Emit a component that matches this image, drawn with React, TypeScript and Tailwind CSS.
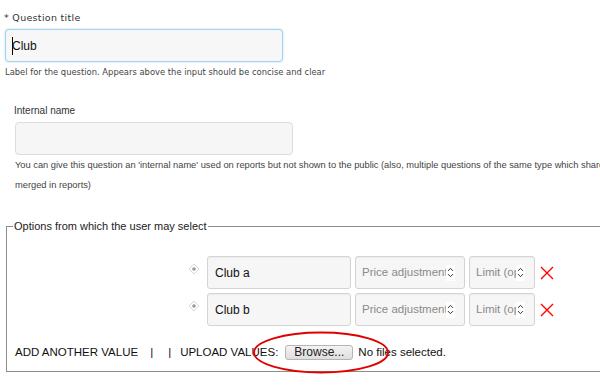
import { ChevronUp, ChevronDown } from 'lucide-react';

function Spinner() {
  return (
    <div className="flex flex-col items-center justify-center bg-white w-[9px] h-[16px] -space-y-[3px] shrink-0">
      <ChevronUp className="w-[9px] h-[9px] text-[#222]" strokeWidth={2.5} />
      <ChevronDown className="w-[9px] h-[9px] text-[#222]" strokeWidth={2.5} />
    </div>
  );
}

function DragHandle() {
  return (
    <svg width="12" height="12" viewBox="0 0 12 12" className="mt-[-8px]">
      <path d="M6 1 L11 6 L6 11 L1 6 Z" fill="none" stroke="#d6d6d6" strokeWidth="1" />
      <circle cx="6" cy="6" r="1.8" fill="#9a9a9a" />
    </svg>
  );
}

function OptionRow({ label }: { label: string }) {
  const box = 'h-[33px] bg-[#f6f6f6] border border-[#d4d4d4] rounded-[3px] shadow-[inset_0_1px_1px_rgba(0,0,0,0.04)] flex items-center';
  return (
    <div className="flex items-center">
      <div className="w-[19px] flex justify-start">
        <DragHandle />
      </div>
      <div className={`${box} w-[144px] pl-[7px] text-[12px] text-[#111]`}>{label}</div>
      <div className={`${box} w-[110px] ml-[4px] pl-[6px] pr-[9px] text-[11.5px] text-[#8a8a8a] overflow-hidden`}>
        <span className="whitespace-nowrap overflow-hidden w-[86px]">Price adjustment (optional)</span>
        <Spinner />
      </div>
      <div className={`${box} w-[66px] ml-[4px] pl-[6px] pr-[9px] text-[11.5px] text-[#8a8a8a] overflow-hidden`}>
        <span className="whitespace-nowrap overflow-hidden w-[42px]">Limit (optional)</span>
        <Spinner />
      </div>
      <svg width="14" height="14" viewBox="0 0 14 14" className="ml-[5px]">
        <path d="M1 1 L13 13 M13 1 L1 13" stroke="#ff0000" strokeWidth="1.4" />
      </svg>
    </div>
  );
}

export default function App() {
  return (
    <div className="relative w-[600px] h-[392px] overflow-hidden bg-white font-['Liberation_Sans',Arial,sans-serif] text-[#333]">
      {/* Question title */}
      <div className="pt-[12px] pl-[4px]">
        <div className="h-[12px] leading-[12px] text-[9.5px] tracking-[0.3px] font-['DejaVu_Sans',sans-serif] text-[#333]">
          * Question title
        </div>
        <div className="mt-[5px] ml-[1px] w-[278px] h-[33px] border border-[#9fd3ee] rounded-[4px] bg-[#f7f7f7] shadow-[0_0_2px_rgba(100,180,230,0.5)] flex items-center pl-[6px] text-[12px] text-[#111]">
          <span className="w-[1px] h-[18px] bg-black mr-[-1px]" />
          Club
        </div>
        <div className="mt-[4px] ml-[1px] h-[12px] leading-[12px] text-[8.4px] font-['DejaVu_Sans',sans-serif] text-[#444] whitespace-nowrap">
          Label for the question. Appears above the input should be concise and clear
        </div>
      </div>

      {/* Internal name */}
      <div className="mt-[27px] pl-[14px]">
        <div className="h-[12px] leading-[12px] text-[10px] text-[#333]">Internal name</div>
        <div className="mt-[5px] ml-[1px] w-[278px] h-[33px] border border-[#dcdcdc] rounded-[4px] bg-[#f6f6f6]" />
        <div className="ml-[1px] leading-[20px] text-[9.3px] text-[#444] w-[700px]">
          <div className="whitespace-nowrap">
            You can give this question an 'internal name' used on reports but not shown to the public (also, multiple questions of the same type which share an internal name are
          </div>
          <div>merged in reports)</div>
        </div>
      </div>

      {/* Options */}
      <fieldset className="mt-[25px] ml-[6px] w-[640px] border border-[#8c8c8c] pl-[8px] pb-[12px]">
        <legend className="ml-[-2px] px-[1px] h-[13px] leading-[13px] text-[11px] text-[#222]">
          Options from which the user may select
        </legend>
        <div className="mt-[23px] pl-[173px] flex flex-col gap-[4px]">
          <OptionRow label="Club a" />
          <OptionRow label="Club b" />
        </div>
        <div className="mt-[19px] h-[14px] leading-[14px] text-[11.5px] text-[#111] flex items-center whitespace-nowrap">
          <span>ADD ANOTHER VALUE</span>
          <span className="ml-[12px]">|</span>
          <span className="ml-[15px]">|</span>
          <span className="ml-[9px]">UPLOAD VALUES:</span>
          <span className="ml-[7px] h-[15px] px-[8px] flex items-center rounded-[3px] border border-[#b5b5b5] bg-gradient-to-b from-[#f4f4f4] to-[#dedede] text-[12px] text-[#222]">
            Browse...
          </span>
          <span className="ml-[5px]">No files selected.</span>
        </div>
      </fieldset>

      {/* annotation */}
      <svg className="absolute left-[250px] top-[329px]" width="142" height="47" viewBox="0 0 142 47">
        <ellipse cx="71" cy="23.5" rx="67" ry="20" fill="none" stroke="#e00000" strokeWidth="2" />
      </svg>
    </div>
  );
}
